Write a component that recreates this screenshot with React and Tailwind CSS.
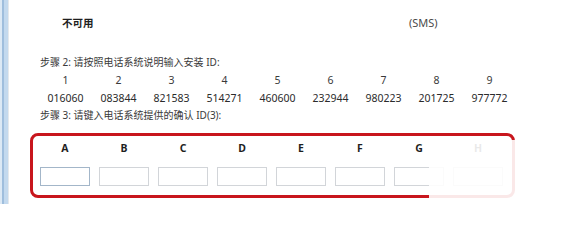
const ids = ['016060', '083844', '821583', '514271', '460600', '232944', '980223', '201725', '977772'];
const letters = ['A', 'B', 'C', 'D', 'E', 'F', 'G', 'H'];

export default function App() {
  return (
    <div className="relative flex h-[204px] w-[586px] overflow-hidden bg-white font-['Noto_Sans','Noto_Sans_CJK_SC',sans-serif] text-[10px] text-[#2b2b2b]">
      {/* window edge */}
      <div className="flex h-full shrink-0">
        <div className="w-[2px] bg-[#dce9f5]" />
        <div className="w-[2px] bg-[#9fbedd]" />
        <div className="w-[4px] bg-[#c3d9ee]" />
        <div className="w-[1px] bg-[#e4e8ec]" />
      </div>

      <main className="flex flex-col pl-[31px] pt-[16px]">
        <div className="flex h-[14px] items-center leading-[14px]">
          <span className="ml-[22px] w-[347px] text-[10.5px] font-bold text-[#1f1f1f]">不可用</span>
          <span className="text-[11px] text-[#4a4a4a]">(SMS)</span>
        </div>

        <p className="mt-[25px] h-[14px] leading-[14px] text-[#3a3a3a]">步骤 2: 请按照电话系统说明输入安装 ID:</p>

        <div className="-ml-px mt-[4px] grid grid-cols-[repeat(9,53px)] text-[10.5px] leading-[14px] text-[#3a3a3a]">
          {ids.map((_, i) => (
            <span key={i} className="text-center">{i + 1}</span>
          ))}
        </div>
        <div className="-ml-px mt-[4px] grid grid-cols-[repeat(9,53px)] text-[10.5px] leading-[14px]">
          {ids.map((v) => (
            <span key={v} className="text-center">{v}</span>
          ))}
        </div>

        <p className="mt-[3px] h-[14px] leading-[14px] text-[#3a3a3a]">步骤 3: 请键入电话系统提供的确认 ID(3):</p>

        <div className="-ml-[10px] mt-[11px] w-[485px] rounded-[8px] border-[3px] border-[#c8161d] pb-[9px] pl-[7px] pt-[5px]">
          <div className="grid grid-cols-[repeat(8,50px)] gap-x-[9px] text-[10.5px] leading-[14px]">
            {letters.map((l) => (
              <span key={l} className="text-center font-bold text-[#1f1f1f]">{l}</span>
            ))}
          </div>
          <div className="mt-[12px] grid grid-cols-[repeat(8,50px)] gap-x-[9px]">
            {letters.map((l, i) => (
              <div
                key={l}
                className={i === 0 ? 'h-[19px] border border-[#a3b6c9] bg-white' : 'h-[19px] border border-[#d2d5d9] bg-white'}
              />
            ))}
          </div>
        </div>
      </main>

      {/* faded watermark area */}
      <div className="absolute bottom-0 left-[429px] right-0 top-[140px] bg-white/90" />
    </div>
  );
}
